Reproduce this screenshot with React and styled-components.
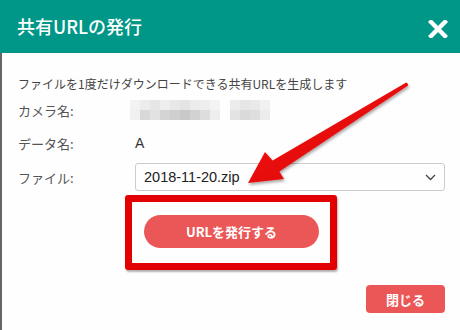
import styled, { createGlobalStyle } from "styled-components";

const GlobalStyle = createGlobalStyle`
  html, body {
    margin: 0;
    padding: 0;
    background: #fefefe;
  }
  body {
    width: 460px;
    height: 330px;
    overflow: hidden;
    font-family: "Noto Sans CJK JP", "Noto Sans", sans-serif;
  }
`;

const mosaicTop = ["#f2f2f2", "#ececec", "#e6e6e6", "#ededed", "#e8e8e8", "#e4e4e4", "#ebebeb", "#eeeeee", "#f4f4f4"];
const mosaicBottom = ["#f0f0f0", "#d8d8d8", "#e2e2e2", "#d4d4d4", "#cfcfcf", "#c8c8c8", "#d2d2d2", "#dddddd", "#eeeeee"];
const mosaicTop2 = ["#ececec", "#e6e6e6", "#e9e9e9", "#f1f1f1"];
const mosaicBottom2 = ["#e3e3e3", "#dadada", "#dedede", "#ececec"];

export default function App() {
  return (
    <Modal>
      <GlobalStyle />
      <Header>
        <Title>共有URLの発行</Title>
        <CloseIcon width="20" height="18" viewBox="0 0 20 18" aria-label="閉じる">
          <path d="M3 2 L17 16 M17 2 L3 16" stroke="#fff" strokeWidth="4.4" strokeLinecap="square" />
        </CloseIcon>
      </Header>

      <Body>
        <Description>ファイルを1度だけダウンロードできる共有URLを生成します</Description>

        <Row $top={8}>
          <Label>カメラ名:</Label>
          <Mosaic>
            <MosaicGroup $cols={9}>
              {mosaicTop.concat(mosaicBottom).map((c, i) => (
                <Cell key={i} style={{ background: c }} />
              ))}
            </MosaicGroup>
            <MosaicGroup $cols={4}>
              {mosaicTop2.concat(mosaicBottom2).map((c, i) => (
                <Cell key={i} style={{ background: c }} />
              ))}
            </MosaicGroup>
          </Mosaic>
        </Row>

        <Row $top={13}>
          <Label>データ名:</Label>
          <Value>A</Value>
        </Row>

        <Row $top={10} $height={28}>
          <Label>ファイル:</Label>
          <Select>
            <span>2018-11-20.zip</span>
            <svg width="11" height="7" viewBox="0 0 11 7">
              <path d="M1 1 L5.5 5.5 L10 1" fill="none" stroke="#444" strokeWidth="1.3" />
            </svg>
          </Select>
        </Row>

        <Highlight>
          <IssueButton type="button">URLを発行する</IssueButton>
        </Highlight>

        <Footer>
          <CloseButton type="button">閉じる</CloseButton>
        </Footer>

        {/* annotation arrow drawn over the dialog */}
        <Arrow width="460" height="330" viewBox="0 0 460 330">
          <defs>
            <linearGradient id="arrowFill" x1="0" y1="0" x2="1" y2="1">
              <stop offset="0" stopColor="#ff1a1a" />
              <stop offset="1" stopColor="#d00000" />
            </linearGradient>
            <filter id="arrowShadow" x="-10%" y="-10%" width="130%" height="140%">
              <feDropShadow dx="1" dy="2" stdDeviation="1.5" floodColor="#000" floodOpacity="0.35" />
            </filter>
          </defs>
          <polygon
            points="248,183 265,152 272.6,160.5 406.2,82.4 407.6,83.4 408.2,85.4 279.4,171.5 284,179"
            fill="url(#arrowFill)"
            filter="url(#arrowShadow)"
          />
        </Arrow>
      </Body>
    </Modal>
  );
}

const Modal = styled.div`
  width: 460px;
  height: 330px;
  display: flex;
  flex-direction: column;
  background: #fefefe;
`;

const Header = styled.header`
  height: 53px;
  flex-shrink: 0;
  background: #009688;
  display: flex;
  align-items: center;
  justify-content: space-between;
  padding: 0 12px 0 17px;
  box-sizing: border-box;
`;

const Title = styled.h1`
  margin: 0;
  color: #fff;
  font-size: 18px;
  font-weight: 500;
  line-height: 1;
  padding-bottom: 1px;
`;

const CloseIcon = styled.svg`
  display: block;
  margin-top: 4px;
`;

const Body = styled.div`
  position: relative;
  flex: 1;
  border-left: 2px solid #666;
  padding: 23px 15px 0 16px;
  color: #444;
`;

const Description = styled.p`
  margin: 0;
  font-size: 12px;
  line-height: 16px;
  color: #444;
`;

const Row = styled.div`
  display: grid;
  grid-template-columns: 117px 1fr;
  align-items: center;
  margin-top: ${(p) => p.$top}px;
  height: ${(p) => p.$height || 20}px;
`;

const Label = styled.span`
  font-size: 13px;
  color: #555;
`;

const Value = styled.span`
  font-family: "Liberation Sans", "Noto Sans CJK JP", sans-serif;
  font-size: 14px;
  color: #333;
`;

const Mosaic = styled.div`
  display: flex;
  gap: 10px;
  margin-left: -5px;
`;

const MosaicGroup = styled.div`
  display: grid;
  grid-template-columns: repeat(${(p) => p.$cols}, 10px);
  grid-template-rows: 10px 10px;
`;

const Cell = styled.div``;

const Select = styled.div`
  height: 28px;
  box-sizing: border-box;
  border: 1px solid #ccc;
  border-radius: 3px;
  display: flex;
  align-items: center;
  justify-content: space-between;
  padding: 0 8px 0 8px;
  font-family: "Liberation Sans", Arial, sans-serif;
  font-size: 14.5px;
  color: #222;
`;

const Highlight = styled.div`
  margin: 4px 0 0 107px;
  width: 212px;
  height: 75px;
  box-sizing: border-box;
  border: 7px solid #e30000;
  border-radius: 3px;
  box-shadow: 1px 2px 2px rgba(0, 0, 0, 0.3);
  padding: 13px 11px 15px 12px;
  background: #fefefe;
`;

const IssueButton = styled.button`
  width: 175px;
  height: 33px;
  border: none;
  border-radius: 17px;
  background: #eb5757;
  color: #fff;
  font-family: "Noto Sans CJK JP", sans-serif;
  font-size: 13px;
  font-weight: 700;
  padding: 0;
  cursor: pointer;
`;

const Footer = styled.div`
  display: flex;
  justify-content: flex-end;
  margin-top: 15px;
`;

const CloseButton = styled.button`
  width: 79px;
  height: 28px;
  border: none;
  border-radius: 4px;
  background: #eb5757;
  color: #fff;
  font-family: "Noto Sans CJK JP", sans-serif;
  font-size: 13px;
  font-weight: 700;
  padding: 0;
  cursor: pointer;
`;

const Arrow = styled.svg`
  position: absolute;
  left: -2px;
  top: -53px;
  pointer-events: none;
`;
